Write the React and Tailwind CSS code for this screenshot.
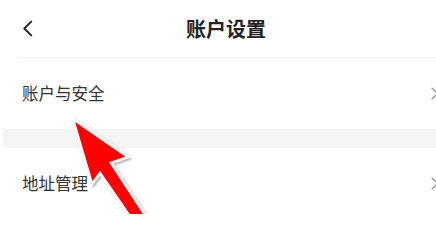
import React from 'react';

const rows = ['账户与安全', '地址管理'];

function Chevron({ dir = 'right', className }) {
  return (
    <svg viewBox="0 0 10 16" className={className} fill="none" stroke="currentColor" strokeWidth="1.8" strokeLinecap="round" strokeLinejoin="round">
      {dir === 'left' ? <path d="M8.5 1.5 L2 8 L8.5 14.5" /> : <path d="M1.5 1.5 L8 8 L1.5 14.5" />}
    </svg>
  );
}

function SettingRow({ label }) {
  return (
    <div className="flex h-[71px] items-center justify-between pl-[22px]">
      <span className="text-[16.5px] text-[#333333]">{label}</span>
      <Chevron className="mr-[-4px] h-[13px] w-[10px] text-[#9a9a9a]" />
    </div>
  );
}

export default function App() {
  return (
    <div
      className="relative h-[214px] w-[436px] overflow-hidden bg-white"
      style={{ fontFamily: '"Noto Sans CJK SC", "Noto Sans", sans-serif' }}
    >
      <div className="grid h-[57px] grid-cols-[1fr_auto_1fr] items-center">
        <div className="pl-[22px]">
          <Chevron dir="left" className="h-[17px] w-[11px] text-[#222222]" />
        </div>
        <h1 className="pl-[16px] text-[20px] font-bold text-[#222222]">账户设置</h1>
        <div />
      </div>
      <div className="ml-[17px] border-b border-[#f3f3f3]" />

      <SettingRow label={rows[0]} />
      <div className="ml-[3px] h-[19px] bg-[#f5f5f5]" />
      <SettingRow label={rows[1]} />

      {/* annotation arrow */}
      <svg className="pointer-events-none absolute left-0 top-0" width="436" height="214" viewBox="0 0 436 214">
        <defs>
          <filter id="shadow" x="-20%" y="-20%" width="140%" height="140%">
            <feDropShadow dx="1.5" dy="1.5" stdDeviation="1.2" floodColor="#000" floodOpacity="0.35" />
          </filter>
        </defs>
        <polygon
          points="73,119 128,157 111,163 147,218 131,218 100,173 92,184"
          fill="#ff0000"
          stroke="#ffffff"
          strokeWidth="2.5"
          strokeLinejoin="miter"
          filter="url(#shadow)"
        />
      </svg>
    </div>
  );
}
